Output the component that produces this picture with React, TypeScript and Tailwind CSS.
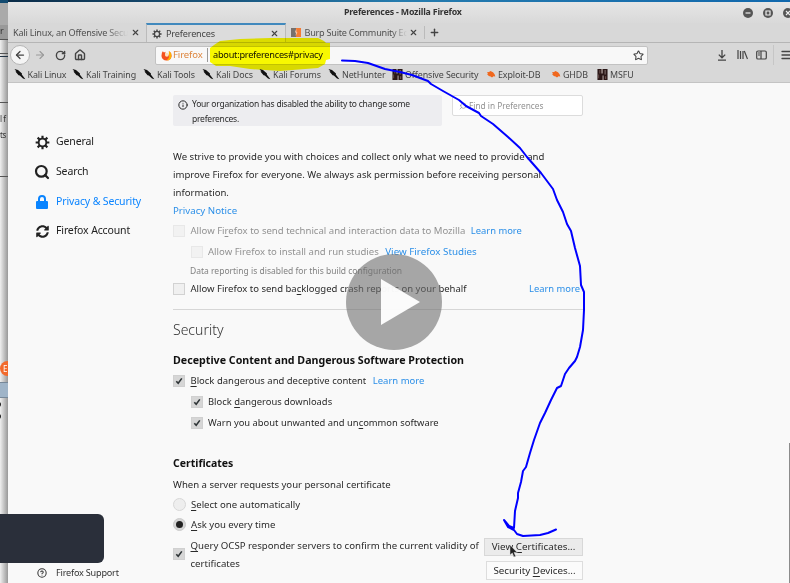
import type { ReactNode } from "react";
import { X, Plus, ArrowLeft, ArrowRight, RotateCw, House, Star, Search, Info, CircleHelp, Menu } from "lucide-react";
import { FaSyncAlt } from "react-icons/fa";

const U = ({ children }: { children: ReactNode }) => <span className="underline underline-offset-2">{children}</span>;

const Check = ({ on = false, dim = false }: { on?: boolean; dim?: boolean }) => (
  <span
    className={`flex h-3 w-3 shrink-0 items-center justify-center border ${
      on ? "border-[#d0d0d0] bg-[#d6d6d6]" : dim ? "border-[#e8e8e8] bg-[#f2f2f2]" : "border-[#d2d2d2] bg-[#f0f0f0]"
    }`}
  >
    {on && (
      <svg viewBox="0 0 10 10" className="h-2.5 w-2.5" fill="none" stroke="#2e3436" strokeWidth="1.6">
        <path d="M2.3 5.2 4.2 7.3 7.8 2.4" />
      </svg>
    )}
  </span>
);

const Gear = ({ className }: { className: string }) => (
  <svg viewBox="0 0 16 16" className={className} fill="none" stroke="currentColor">
    <circle cx="8" cy="8" r="4.1" strokeWidth="2" />
    <path strokeWidth="2.3" d="M8 .7v3M8 12.3v3M.7 8h3M12.3 8h3M2.8 2.8l2.1 2.1M11.1 11.1l2.1 2.1M2.8 13.2l2.1-2.1M11.1 4.9l2.1-2.1" />
  </svg>
);

const Knife = () => (
  <svg viewBox="0 0 12 12" className="h-3 w-3 shrink-0" fill="#111">
    <path d="M.5 1 4 2 8 5.4 7.8 6.4 11.4 11.2 9 10.6 5.8 7.4 4.6 7.2 1.4 3.6 2.4 3.4Z" />
  </svg>
);

const Bug = () => (
  <svg viewBox="0 0 10 10" className="h-2.5 w-2.5 shrink-0" fill="#f0681e">
    <path d="M1 3.2 3 3 4.5 2 7 3.2 8.6 5.2 9.3 7.6 7.5 7.2 6 8.4 4.6 7.4 2.8 7 1 5 2 4.8Z" />
  </svg>
);

const Dragon = () => (
  <svg viewBox="0 0 11 12" className="h-[11px] w-[11px] shrink-0">
    <path fill="#2a1717" d="M0 0h11v12H0z" />
    <path fill="#c9bcb8" d="M4.4 0h1.2v5H4.4zM5.6 7h1v5h-1zM8 1h.6v5H8z" />
    <path fill="#7d5f5a" d="M2.2 1h.8v4h-.8zM8.5 8h1v3h-1zM1 6h.8v4H1z" />
  </svg>
);

const Flame = () => (
  <svg viewBox="0 0 12 12" className="h-[11px] w-[11px] shrink-0">
    <path fill="#f4511e" d="M1 3 2 1.3 3.2 2.7 5 1.8 4.6 4 7 5.3 9 4.5 8.6 1 11 3.4 11.6 6.6A5.6 5.6 0 0 1 .5 6.6Z" />
    <path fill="#ffb300" d="M8.6 1.2 11 3.6 11.3 7A5 5 0 0 1 6 11.2Q10 8 8.6 4.5Z" />
    <circle cx="6.4" cy="5.2" r="2.1" fill="#fbe3c0" />
  </svg>
);

const Burp = () => (
  <svg viewBox="0 0 10 9" className="h-[9px] w-2.5 shrink-0">
    <path fill="#77706c" d="M0 0h5v9H0z" />
    <path fill="#f27b35" d="M5 0h5v9H5z" />
    <path fill="#f3c9ae" d="M5.2.8 4 4.2 5 4.7 4.6 8 6.4 4.6 5.5 4Z" />
  </svg>
);

const Mark = ({ icon, className, children }: { icon: ReactNode; className: string; children: ReactNode }) => (
  <div className={`flex shrink-0 items-center gap-0.5 ${className}`}>
    {icon}
    <span>{children}</span>
  </div>
);

const Nav = ({ icon, children, active = false }: { icon: ReactNode; children: ReactNode; active?: boolean }) => (
  <div className={`flex h-[29.7px] items-center gap-[7px] text-[10.5px] tracking-[-0.14px] ${active ? "text-[#0a84ff]" : "text-[#222]"}`}>
    <span className="flex w-[14px] justify-center">{icon}</span>
    <span>{children}</span>
  </div>
);

const Link = ({ children, className = "" }: { children: ReactNode; className?: string }) => (
  <span className={`text-[#2b8fe8] ${className}`}>{children}</span>
);

const WinButton = ({ children }: { children: ReactNode }) => (
  <svg viewBox="0 0 10 10" className="h-2.5 w-2.5 shrink-0" fill="none" stroke="#eee" strokeWidth="1.2">
    <circle cx="5" cy="5" r="5" fill="#555" stroke="none" />
    {children}
  </svg>
);

function Behind() {
  return (
    <div className="flex w-2 shrink-0 flex-col overflow-hidden bg-gradient-to-r from-[#f0f0f0] to-[#999] text-[9px] text-[#333]">
      <div className="h-[3px] bg-[#124a70]" />
      <div className="h-[22px] bg-[#aaa]" />
      <div className="h-[14px] bg-[#999] leading-[12px]">r</div>
      <div className="h-[15px] border-y border-[#555]" />
      <div className="mt-[2px] h-[47px] border-t border-b border-t-[#234] border-b-[#555]" />
      <div className="mt-2 h-4 text-[8px] leading-4 tracking-tighter whitespace-nowrap">l f</div>
      <div className="h-4 text-[8px] leading-4 tracking-tighter">ts</div>
      <div className="mt-[33px] h-[156px] border-t border-[#555]" />
      <div className="mt-[29px] h-[15px] w-4 shrink-0 rounded-full bg-[#f26a2c] pl-[3px] text-[8px] leading-[15px] text-white">E</div>
      <div className="mt-[6px] h-4 border-y border-[#789] bg-[#9fb4c8]" />
      <div className="mt-1 -ml-1 h-[5px] w-[5px] rounded-full bg-[#222]" />
      <div className="mt-[7px] -ml-1 h-[5px] w-[5px] rounded-full bg-[#222]" />
    </div>
  );
}

function Chrome() {
  return (
    <div className="flex flex-col bg-[#d8d8d8] text-[#444]">
      <div className="flex h-[21px] items-center bg-gradient-to-b from-[#e6e6e6] to-[#d9d9d9]">
        <span className="ml-[336px] w-[118px] text-[8.8px] font-bold tracking-[-0.19px] whitespace-nowrap text-[#333]">Preferences - Mozilla Firefox</span>
        <div className="ml-auto flex w-[47px] shrink-0 gap-[10px]">
          <WinButton><path d="M2.5 5h5" /></WinButton>
          <WinButton><path d="M3 3h4v4H3z" /></WinButton>
          <WinButton><path d="M3 3l4 4M7 3 3 7" /></WinButton>
        </div>
      </div>
      <div className="flex h-[20px] items-stretch border-b border-[#b5b5b5] text-[9.1px] tracking-[-0.15px] whitespace-nowrap">
        <div className="flex w-[138px] shrink-0 items-center pl-[5px]">
          <span className="w-[115px] overflow-hidden bg-gradient-to-r from-[#4a4a4a] from-80% to-[#d8d8d8] bg-clip-text tracking-[-0.22px] text-transparent">Kali Linux, an Offensive Security</span>
          <X className="ml-[3px] h-[9px] w-[9px]" strokeWidth={3} />
        </div>
        <div className="flex w-[140px] shrink-0 items-center border-x border-t-2 border-x-[#bbb] border-t-[#4189bd] bg-[#dcdcdc] pl-[5px]">
          <Gear className="h-[10px] w-[10px]" />
          <span className="ml-1 w-[103px]">Preferences</span>
          <X className="ml-px h-[9px] w-[9px]" strokeWidth={3} />
        </div>
        <div className="flex w-[138px] shrink-0 items-center pl-[4.5px]">
          <Burp />
          <span className="ml-1 w-[102px] overflow-hidden bg-gradient-to-r from-[#4a4a4a] from-85% to-[#d8d8d8] bg-clip-text tracking-[-0.24px] text-transparent">Burp Suite Community Edition</span>
          <X className="ml-[2px] h-[9px] w-[9px]" strokeWidth={3} />
        </div>
        <div className="my-[3px] border-l border-[#bbb]" />
        <Plus className="mt-[4px] ml-[4px] h-[11px] w-[11px]" strokeWidth={3} />
      </div>
      <div className="flex h-6 items-center">
        <div className="ml-0.5 flex h-5 w-5 shrink-0 items-center justify-center rounded-full border border-[#b5b5b5] bg-[#f5f5f5]">
          <ArrowLeft className="h-3 w-3" strokeWidth={2.5} />
        </div>
        <ArrowRight className="ml-1 h-3 w-3 shrink-0 text-[#999]" strokeWidth={2.2} />
        <RotateCw className="ml-[9px] h-[11px] w-[11px] shrink-0" strokeWidth={3} />
        <House className="ml-2 h-3 w-3 shrink-0" strokeWidth={2.8} />
        <div className="ml-[69px] flex h-[19px] w-[493px] shrink-0 items-center rounded-xs border border-[#c2c2c2] bg-[#f8f8f8] pl-[5px] text-[9.2px] tracking-[-0.24px]">
          <Flame />
          <span className="ml-px w-[31px] text-[9.5px] tracking-[-0.1px] text-[#dd853d]">Firefox</span>
          <span className="ml-[3px] h-[14px] border-l border-[#999]" />
          <span className="ml-[5px] text-[#111]">about:preferences#privacy</span>
          <Star className="mr-[3px] ml-auto h-[11px] w-[11px]" strokeWidth={2.3} />
        </div>
        <svg viewBox="0 0 10 11" className="ml-[69px] h-[11px] w-2.5 shrink-0" fill="none" stroke="currentColor" strokeWidth="1.3">
          <path d="M5 0v7.5M1.8 4.6 5 7.8 8.2 4.6M1 10.2h8" />
        </svg>
        <svg viewBox="0 0 11 10" className="ml-[10px] h-2.5 w-[11px] shrink-0" fill="none" stroke="currentColor" strokeWidth="1.2">
          <path d="M1 0v9M3.5 1v8M6 1v8M7.3 1 10.5 9" />
        </svg>
        <svg viewBox="0 0 11 10" className="ml-2 h-2.5 w-[11px] shrink-0" fill="none" stroke="currentColor" strokeWidth="1.2">
          <rect x=".7" y="1" width="9.6" height="8" rx="1.3" />
          <path d="M5 1v8M2 3h2M2 5h2" />
        </svg>
        <span className="ml-[6px] h-5 border-l border-[#c6c6c6]" />
        <Menu className="-mr-2 ml-[6px] h-3 w-3 shrink-0" strokeWidth={2.6} />
      </div>
      <div className="flex h-4 items-center border-b border-[#c4c4c4] pl-[5.5px] text-[8.9px] tracking-[-0.1px] whitespace-nowrap">
        <Mark icon={<Knife />} className="w-[58.5px]">Kali Linux</Mark>
        <Mark icon={<Knife />} className="w-[71px]">Kali Training</Mark>
        <Mark icon={<Knife />} className="w-[59px]">Kali Tools</Mark>
        <Mark icon={<Knife />} className="w-[57px]">Kali Docs</Mark>
        <Mark icon={<Knife />} className="w-[69px]">Kali Forums</Mark>
        <Mark icon={<Knife />} className="w-[64px]">NetHunter</Mark>
        <Mark icon={<Dragon />} className="w-[94px]">Offensive Security</Mark>
        <Mark icon={<Bug />} className="w-[65px]">Exploit-DB</Mark>
        <Mark icon={<Bug />} className="w-[46px]">GHDB</Mark>
        <Mark icon={<Dragon />} className="w-[50px]">MSFU</Mark>
      </div>
    </div>
  );
}

function Sidebar() {
  return (
    <div className="flex w-[165px] shrink-0 flex-col pt-[44.4px] pl-[27px]">
      <Nav icon={<Gear className="h-[15px] w-[15px] shrink-0" />}>General</Nav>
      <Nav icon={<Search className="h-4 w-4 shrink-0" strokeWidth={3.3} />}>Search</Nav>
      <Nav active icon={
        <svg viewBox="0 0 12 14" className="h-[14px] w-3" fill="currentColor">
          <path d="M1 6h1V4a4 4 0 0 1 8 0v2h1a1 1 0 0 1 1 1v6a1 1 0 0 1-1 1H1a1 1 0 0 1-1-1V7a1 1 0 0 1 1-1Zm3 0h4V4a2 2 0 0 0-4 0Z" />
        </svg>
      }>Privacy &amp; Security</Nav>
      <Nav icon={<FaSyncAlt className="h-[13px] w-[13px] shrink-0" />}>Firefox Account</Nav>
      <div className="mt-auto flex h-5 items-center text-[9.1px] tracking-[-0.2px] text-[#333]">
        <CircleHelp className="ml-[2px] h-[10px] w-[10px]" strokeWidth={2.5} />
        <span className="ml-[9px]">Firefox Support</span>
      </div>
    </div>
  );
}

function Main() {
  return (
    <div className="flex w-[411px] shrink-0 flex-col pt-3 text-[9.57px] whitespace-nowrap text-[#2a2a2a]">
      <div className="flex h-[53.45px] items-start gap-[10px]">
        <div className="flex h-[31px] w-[269px] rounded-xs bg-[#ededf0] pt-[1px] pl-[5px] text-[8.5px] leading-[15px] tracking-[-0.23px]">
          <Info className="mt-1 mr-1 h-[10px] w-[10px]" strokeWidth={2.4} />
          <div>Your organization has disabled the ability to change some<br />preferences.</div>
        </div>
        <div className="flex h-[21px] w-[131px] items-center rounded-xs border border-[#dcdcdc] bg-white pt-px pl-[6px] text-[8.3px] text-[#929292]">
          <Search className="h-2 w-2 -scale-x-100" />
          <span className="ml-[2px]">Find in Preferences</span>
        </div>
      </div>
      <div className="leading-[18px]">
        <div>We strive to provide you with choices and collect only what we need to provide and</div>
        <div>improve Firefox for everyone. We always ask permission before receiving personal</div>
        <div>information.</div>
        <Link className="text-[9.7px]">Privacy Notice</Link>
      </div>
      <div className="flex h-[21px] items-center gap-[5.5px] text-[#929292]">
        <Check dim /><span>Allow Fi<U>r</U>efox to send technical and interaction data to Mozilla</span>
        <Link className="text-[9.4px]">Learn more</Link>
      </div>
      <div className="flex h-[21px] items-center gap-[5.5px] pt-px pl-[17.5px] text-[#929292]">
        <Check dim /><span>Allow Firefox to install and run studies</span><Link className="ml-px text-[9.8px]">View Firefox Studies</Link>
      </div>
      <div className="flex h-[17px] items-center pl-[17px] text-[8.5px] text-[#828282]"><span>Data reporting is disabled for this build configuration</span></div>
      <div className="flex h-5 items-center gap-[5.5px] text-[9.5px]">
        <Check /><span>Allow Firefox to send ba<U>c</U>klogged crash reports on your behalf</span>
        <Link className="mr-1 ml-auto text-[9.4px]">Learn more</Link>
      </div>
      <div className="mt-[10px] border-t border-[#d6d6d6]" />
      <div className="h-10 text-[14px] leading-10 font-light text-[#333]"><span>Security</span></div>
      <div className="h-5 text-[10.67px] leading-5 font-bold text-[#111]"><span>Deceptive Content and Dangerous Software Protection</span></div>
      <div className="flex h-[21px] items-center gap-[5.5px] text-[9.47px]">
        <Check on /><span><U>B</U>lock dangerous and deceptive content</span><Link className="ml-px">Learn more</Link>
      </div>
      <div className="flex h-[21px] items-center gap-[5.5px] pl-[17.5px] text-[9.4px]"><Check on /><span>Block <U>d</U>angerous downloads</span></div>
      <div className="flex h-[21px] items-center gap-[5.5px] pl-[17.5px] text-[9.4px]"><Check on /><span>Warn you about unwanted and un<U>c</U>ommon software</span></div>
      <div className="mt-5 h-5 text-[10.5px] leading-5 font-bold text-[#111]"><span>Certificates</span></div>
      <div className="mt-[2px] h-5 leading-5"><span>When a server requests your personal certificate</span></div>
      <div className="flex h-[19px] items-center gap-[5px]">
        <span className="h-[13px] w-[13px] rounded-full border border-[#d8d8d8] bg-[#eee]" /><span><U>S</U>elect one automatically</span>
      </div>
      <div className="flex h-[21px] items-center gap-[5px]">
        <span className="flex h-[13px] w-[13px] items-center justify-center rounded-full border border-[#ccc] bg-[#d6d6d6]">
          <span className="h-[7px] w-[7px] rounded-full bg-[#222]" />
        </span>
        <span><U>A</U>sk you every time</span>
      </div>
      <div className="mt-[2px] flex">
        <div className="flex w-[311px] shrink-0 items-start gap-[5.5px] text-[9.63px] leading-[18px]">
          <div className="pt-[11px]"><Check on /></div>
          <div><U>Q</U>uery OCSP responder servers to confirm the current validity of<br />certificates</div>
        </div>
        <div className="flex w-[99px] flex-col items-end gap-[5px] pt-[1px] text-[9.8px]">
          <div className="flex h-[18px] w-[99px] items-center justify-center border border-[#d8d8d8] bg-[#ebebeb]"><span>View <U>C</U>ertificates...</span></div>
          <div className="flex h-[19px] w-[97px] items-center justify-center border border-[#ddd] bg-[#fbfbfb]"><span>Security <U>D</U>evices...</span></div>
        </div>
      </div>
    </div>
  );
}

export default function App() {
  return (
    <div className="relative flex h-[583px] w-[790px] overflow-hidden bg-[#f9f9f9] font-['Noto_Sans',sans-serif]">
      <Behind />
      <div className="flex min-w-0 flex-1 flex-col overflow-hidden">
        <div className="h-0.5 shrink-0 bg-gradient-to-r from-[#0b2c48] via-[#267cae] to-[#1168ad]" />
        <Chrome />
        <div className="flex min-h-0 flex-1">
          <Sidebar />
          <Main />
          <div className="mt-auto ml-auto h-[140px] w-px bg-[#8c8c8c]" />
        </div>
      </div>
      <svg viewBox="0 0 790 583" className="pointer-events-none absolute inset-0 h-full w-full mix-blend-multiply">
        <path fill="#ffff00" d="M210 48 214 45 220 41 240 39 270 38 318 38 324 41 326 43 330 43 330 59 326 60 325 64 318 68 280 71 250 69 230 66 216 66 210 62Z" />
      </svg>
      <div className="absolute top-[514px] left-0 h-[49px] w-[104px] rounded-r-md bg-[#2a2f3a]" />
      <svg viewBox="0 0 790 583" className="pointer-events-none absolute inset-0 h-full w-full" fill="none">
        <circle cx="394" cy="302" r="48" fill="#6e6e6e" fillOpacity=".6" />
        <path fill="#fff" fillOpacity=".95" d="M381 279 420 302 381 325Z" />
        <path stroke="#0000ff" strokeWidth="2" strokeLinecap="round" strokeLinejoin="round" d="M342 60.5 355 61 368 63 385 69 400 72 412 75 428 81 431 84 443 91 459 100 466 106 479 113 481 116 493 124 508 137 520 148 527 157 541 173 547 181 553 189 557 200 563 212 567 224 571 231 575 248 580 266 581 285 584 292 584 310 583 330 580 347 577 357 575 361 569 368 565 374 561 386 557 388 551 400 545 413 540 423 534 440 530 453 526 467 523 471 521 482 518 493 518 498 515 511 514 528 509 526 504 520 508 527 512 529 514 530 517 534 523 536 540 535 548 533 556 529.5" />
        <path fill="#222" stroke="#ddd" strokeWidth=".5" d="M510 545v10l2.3-2 1.6 4 1.8-.8-1.7-3.7h3.2Z" />
      </svg>
    </div>
  );
}
